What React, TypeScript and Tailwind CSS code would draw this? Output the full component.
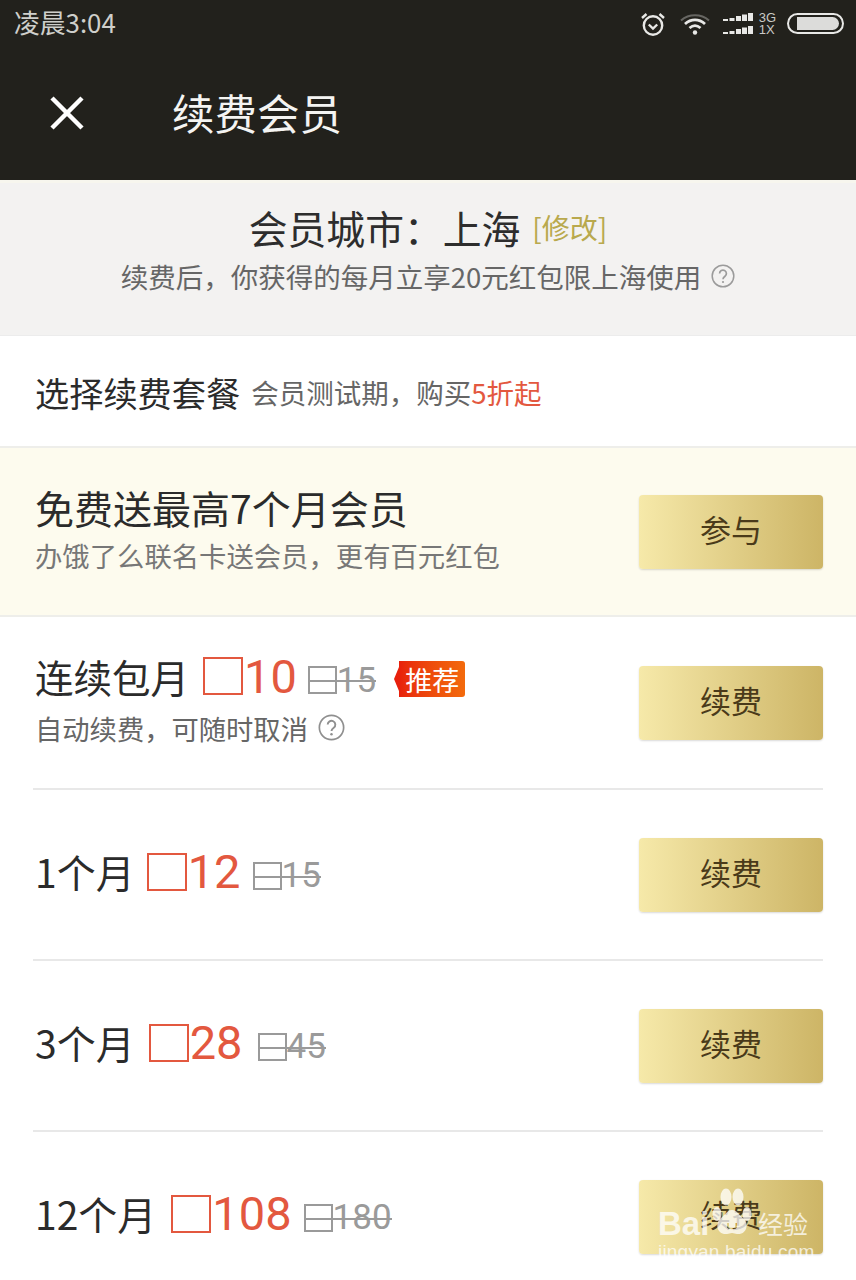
const cjk = "font-['Noto_Sans_CJK_SC','Noto_Sans',sans-serif]";

function Help({ size, className }: { size: number; className: string }) {
  return (
    <svg width={size} height={size} viewBox="0 0 24 24" fill="none" className={className}>
      <circle cx="12" cy="12" r="10.8" stroke="currentColor" strokeWidth="1.5" />
      <path d="M8.6 9.4a3.4 3.4 0 1 1 5.4 2.8c-1.2.9-2 1.5-2 3" stroke="currentColor" strokeWidth="1.7" />
      <circle cx="12" cy="18" r="1.1" fill="currentColor" />
    </svg>
  );
}

function Tofu({ className }: { className: string }) {
  return <span className={`inline-block shrink-0 border-2 ${className}`} />;
}

function BuyButton({ label }: { label: string }) {
  return (
    <button className="flex h-[74px] w-[184px] shrink-0 items-center justify-center rounded-[4px] bg-gradient-to-r from-[#f6e9a9] to-[#cdb566] pb-[4px] text-[31px] text-[#4a3a1a] shadow-[0_1px_2px_rgba(0,0,0,0.15)]">
      {label}
    </button>
  );
}

function Price({ now, was, nowGap, wasGap }: { now: string; was: string; nowGap: string; wasGap: string }) {
  return (
    <>
      <span className={`flex items-center text-[47px] leading-none text-[#e3583f] font-['Roboto',sans-serif] ${nowGap}`}>
        <Tofu className="mr-[1px] h-[38px] w-[40px] border-[#e3583f]" />
        {now}
      </span>
      <span className={`relative mt-[8px] flex items-center text-[35px] leading-none text-[#9a9a9a] font-['Roboto',sans-serif] ${wasGap}`}>
        <Tofu className="h-[28px] w-[29px] border-[#9a9a9a]" />
        {was}
        <span className="absolute inset-x-0 top-1/2 h-[2px] bg-[#9a9a9a]" />
      </span>
    </>
  );
}

function PlanRow({ name, now, was, nowGap, wasGap }: { name: string; now: string; was: string; nowGap: string; wasGap: string }) {
  return (
    <div className="flex h-[169px] items-center justify-between pl-[35px] pr-[33px]">
      <div className="flex items-center pb-[6px]">
        <span className="text-[39px] leading-none text-[#2b2b2b]">{name}</span>
        <Price now={now} was={was} nowGap={nowGap} wasGap={wasGap} />
      </div>
      <BuyButton label="续费" />
    </div>
  );
}

function Divider() {
  return <div className="mx-[33px] h-[2px] bg-[#e8e8e8]" />;
}

function StatusIcons() {
  return (
    <div className="flex items-center text-[#e8e8e6]">
      <svg width="26" height="26" viewBox="0 0 26 26" fill="none" stroke="currentColor" strokeWidth="2.4">
        <circle cx="13" cy="14.5" r="9.2" />
        <path d="M8.8 13.5l4.2 4 4.2-4" />
        <path d="M2 7l4.5-4M24 7l-4.500-4" />
      </svg>
      <svg width="30" height="22" viewBox="0 0 30 22" fill="none" stroke="currentColor" className="ml-[14px]">
        <path d="M1 7.500C9 .5 21 .5 29 7.500" strokeWidth="2" opacity="0.35" />
        <path d="M5 11C11 5.500 19 5.500 25 11" strokeWidth="2.800" />
        <path d="M9.500 15C13 12 17 12 20.500 15" strokeWidth="2.800" />
        <circle cx="15" cy="19.500" r="2.200" fill="currentColor" stroke="none" />
      </svg>
      <svg width="30" height="21" viewBox="0 0 30 21" fill="currentColor" className="ml-[13px]">
        <rect x="0" y="6" width="5" height="2" />
        <rect x="6.500" y="5" width="5" height="3" />
        <rect x="13" y="3" width="5" height="5" />
        <rect x="19" y="1.500" width="5" height="6.500" />
        <rect x="25" y="0" width="5" height="8" />
        <rect x="0" y="19" width="5" height="2" />
        <rect x="6.500" y="18" width="5" height="3" />
        <rect x="13" y="16" width="5" height="5" />
        <rect x="19" y="14.500" width="5" height="6.500" />
        <rect x="25" y="13" width="5" height="8" />
      </svg>
      <div className="ml-[6px] flex flex-col text-[13px] leading-[12px] text-[#c9c9c6] font-['Liberation_Sans',sans-serif]">
        <span>3G</span>
        <span>1X</span>
      </div>
      <div className="ml-[11px] flex h-[21px] w-[57px] items-center justify-end rounded-full border-2 border-[#e8e8e6] pr-[3px]">
        <div className="h-[13px] w-[42px] rounded-r-full bg-[#dcdcda]" />
      </div>
    </div>
  );
}

function Watermark() {
  return (
    <div className="absolute left-[658px] top-[1188px] flex w-[152px] flex-col text-white/75">
      <div className="flex h-[48px] items-end">
        <span className="w-[54px] text-[33px] font-bold leading-[24px] font-['Liberation_Sans',sans-serif]">Bai</span>
        <svg width="40" height="48" viewBox="0 0 40 48" fill="currentColor">
          <ellipse cx="14" cy="9" rx="5.500" ry="8.500" />
          <ellipse cx="26" cy="9" rx="5.500" ry="8.500" />
          <ellipse cx="5" cy="26" rx="4.500" ry="7" />
          <ellipse cx="35" cy="26" rx="4.500" ry="7" />
          <path
            fillRule="evenodd"
            d="M20 22c5 0 7 5 11 8 6 4 5 17-6 16-2 0-3-1-5-1s-3 1-5 1c-11 1-12-12-6-16 4-3 6-8 11-8zm-5 13v4c0 3 10 3 10 0v-4h-2v4c0 1-6 1-6 0v-4z"
          />
        </svg>
        <span className={`ml-[6px] text-[25px] leading-[26px] ${cjk}`}>经验</span>
      </div>
      <span className="mt-[5px] text-[19px] leading-[22px] tracking-[0.2px] font-['Liberation_Sans',sans-serif]">jingyan.baidu.com</span>
    </div>
  );
}

export default function App() {
  return (
    <div className={`relative h-[1280px] w-[856px] overflow-hidden bg-white ${cjk}`}>
      <div className="h-[180px] bg-[#22211c]">
        <div className="flex h-[47px] items-center justify-between pl-[14px] pr-[12px]">
          <span className="pb-[3px] text-[25.800px] leading-none text-[#cfcfcb]">凌晨3:04</span>
          <StatusIcons />
        </div>
        <div className="flex h-[133px] items-center pb-[2px] pl-[50px]">
          <svg width="34" height="34" viewBox="0 0 34 34" stroke="white" strokeWidth="4.500">
            <path d="M2 2l30 30M32 2L2 32" />
          </svg>
          <span className="ml-[88px] text-[42.500px] leading-none text-[#f4f4f2]">续费会员</span>
        </div>
      </div>
      <div className="h-[3px] bg-[#f7f6ee]" />

      <div className="flex h-[152px] flex-col items-center bg-[#f3f2f1] pt-[21px]">
        <div className="flex items-center">
          <span className="text-[38.800px] leading-[46px] text-[#2d2d2d]">会员城市：上海</span>
          <span className="ml-[12px] text-[28px] leading-none text-[#b9a94d]">[修改]</span>
        </div>
        <div className="mt-[6px] flex items-center text-[27.500px] leading-[40px] text-[#666666]">
          续费后，你获得的每月立享20元红包限上海使用
          <Help size={24} className="ml-[10px] text-[#9b9b9b]" />
        </div>
      </div>

      <div className="flex h-[111px] items-center border-t border-[#ececec] pl-[35px] pt-[3px]">
        <span className="text-[34.200px] leading-none text-[#2b2b2b]">选择续费套餐</span>
        <span className="ml-[11px] text-[27.500px] leading-none text-[#666666]">
          会员测试期，购买<span className="text-[#e3583f]">5折起</span>
        </span>
      </div>

      <div className="flex h-[171px] items-center justify-between border-y-2 border-[#eeeeea] bg-[#fdfbee] pl-[35px] pr-[33px]">
        <div className="flex flex-col pb-[5px]">
          <span className="text-[39px] leading-[46px] text-[#2b2b2b]">免费送最高7个月会员</span>
          <span className="mt-[5px] text-[27.350px] leading-[40px] text-[#777777]">办饿了么联名卡送会员，更有百元红包</span>
        </div>
        <BuyButton label="参与" />
      </div>

      <div className="flex h-[171px] items-center justify-between pl-[35px] pr-[33px]">
        <div className="flex flex-col pb-[5px]">
          <div className="flex items-center">
            <span className="text-[38.500px] leading-none text-[#2b2b2b]">连续包月</span>
            <Price now="10" was="15" nowGap="ml-[14px]" wasGap="ml-[11px]" />
            <span className="relative ml-[23px] mt-[6px] flex h-[36px] w-[66px] items-center justify-center rounded-r-[3px] bg-gradient-to-r from-[#e8200c] to-[#f36a0c] text-[27px] leading-none text-white">
              <span className="absolute -left-[5px] top-[6px] size-0 border-y-[12px] border-r-[5px] border-y-transparent border-r-[#e8200c]" />
              推荐
            </span>
          </div>
          <div className="mt-[8px] flex items-center text-[27.300px] leading-[40px] text-[#666666]">
            自动续费，可随时取消
            <Help size={27} className="ml-[10px] text-[#8f8f8f]" />
          </div>
        </div>
        <BuyButton label="续费" />
      </div>
      <Divider />
      <PlanRow name="1个月" now="12" was="15" nowGap="ml-[12px]" wasGap="ml-[12px]" />
      <Divider />
      <PlanRow name="3个月" now="28" was="45" nowGap="ml-[14px]" wasGap="ml-[15px]" />
      <Divider />
      <PlanRow name="12个月" now="108" was="180" nowGap="ml-[15px]" wasGap="ml-[12px]" />

      <Watermark />
    </div>
  );
}
